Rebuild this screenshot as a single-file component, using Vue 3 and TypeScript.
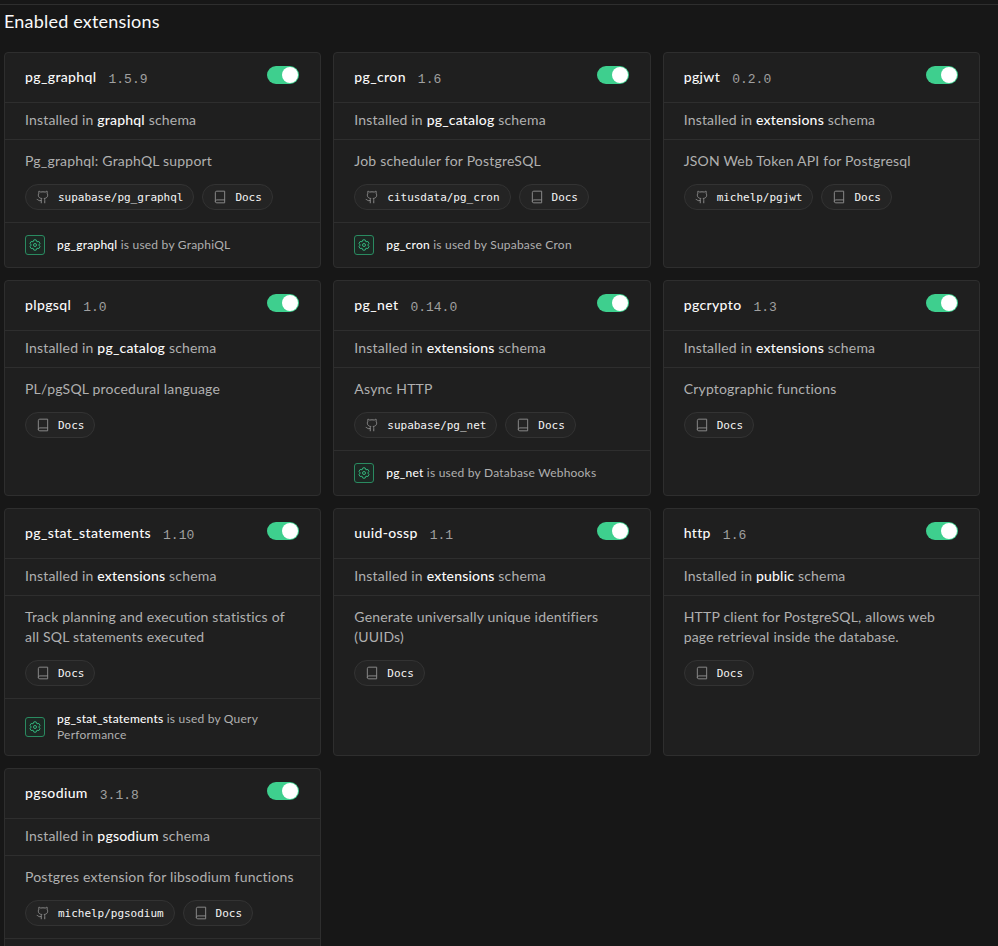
<script setup lang="ts">
interface Extension {
  name: string
  version: string
  schema: string
  description: string
  repo?: string
  usedBy?: string
}

const extensions: Extension[] = [
  { name: 'pg_graphql', version: '1.5.9', schema: 'graphql', description: 'Pg_graphql: GraphQL support', repo: 'supabase/pg_graphql', usedBy: 'GraphiQL' },
  { name: 'pg_cron', version: '1.6', schema: 'pg_catalog', description: 'Job scheduler for PostgreSQL', repo: 'citusdata/pg_cron', usedBy: 'Supabase Cron' },
  { name: 'pgjwt', version: '0.2.0', schema: 'extensions', description: 'JSON Web Token API for Postgresql', repo: 'michelp/pgjwt' },
  { name: 'plpgsql', version: '1.0', schema: 'pg_catalog', description: 'PL/pgSQL procedural language' },
  { name: 'pg_net', version: '0.14.0', schema: 'extensions', description: 'Async HTTP', repo: 'supabase/pg_net', usedBy: 'Database Webhooks' },
  { name: 'pgcrypto', version: '1.3', schema: 'extensions', description: 'Cryptographic functions' },
  { name: 'pg_stat_statements', version: '1.10', schema: 'extensions', description: 'Track planning and execution statistics of all SQL statements executed', usedBy: 'Query Performance' },
  { name: 'uuid-ossp', version: '1.1', schema: 'extensions', description: 'Generate universally unique identifiers (UUIDs)' },
  { name: 'http', version: '1.6', schema: 'public', description: 'HTTP client for PostgreSQL, allows web page retrieval inside the database.' },
  { name: 'pgsodium', version: '3.1.8', schema: 'pgsodium', description: 'Postgres extension for libsodium functions', repo: 'michelp/pgsodium', usedBy: '' },
]
</script>

<template>
  <main class="page">
    <h2 class="title">Enabled extensions</h2>
    <div class="grid">
      <article v-for="ext in extensions" :key="ext.name" class="card">
        <header class="head">
          <h3 class="name">{{ ext.name }}</h3>
          <span class="version">{{ ext.version }}</span>
          <button class="toggle" type="button" role="switch" aria-checked="true"><span class="knob"></span></button>
        </header>
        <p class="schema">Installed in <b>{{ ext.schema }}</b> schema</p>
        <div class="body">
          <p class="description">{{ ext.description }}</p>
          <div class="chips">
            <a v-if="ext.repo" class="chip">
              <svg class="icon" viewBox="0 0 24 24">
                <path d="M15 22v-4a4.8 4.8 0 0 0-1-3.500c3 0 6-2 6-5.500.08-1.250-.27-2.480-1-3.500.28-1.150.28-2.350 0-3.500 0 0-1 0-3 1.500-2.640-.5-5.360-.5-8 0C6 2 5 2 5 2c-.3 1.150-.3 2.350 0 3.500A5.403 5.403 0 0 0 4 9c0 3.500 3 5.500 6 5.500-.39.490-.680 1.050-.850 1.650-.17.600-.22 1.230-.15 1.850v4" />
                <path d="M9 18c-4.510 2-5-2-7-2" />
              </svg>
              <span class="chip-text">{{ ext.repo }}</span>
            </a>
            <a class="chip">
              <svg class="icon" viewBox="0 0 24 24">
                <path d="M4 19.500v-15A2.500 2.500 0 0 1 6.500 2H20v20H6.500a2.500 2.500 0 0 1 0-5H20" />
              </svg>
              <span class="chip-text">Docs</span>
            </a>
          </div>
        </div>
        <footer v-if="ext.usedBy !== undefined" class="used">
          <span class="badge">
            <svg viewBox="0 0 24 24">
              <path d="M9.800 1.700H14.200L15.750 5.500 19.800 5 22 8.750 19.500 12 22 15.250 19.800 19 15.750 18.500 14.200 22.300H9.800L8.250 18.500 4.200 19 2 15.250 4.500 12 2 8.750 4.200 5 8.250 5.500Z" />
              <circle cx="12" cy="12" r="3" />
            </svg>
          </span>
          <p v-if="ext.usedBy" class="used-text"><b>{{ ext.name }}</b> is used by {{ ext.usedBy }}</p>
        </footer>
      </article>
    </div>
  </main>
</template>

<style>
body {
  margin: 0;
  background: #171717;
}
</style>

<style scoped>
.page {
  box-sizing: border-box;
  height: 100vh;
  overflow: hidden;
  padding: 4px 18px 0 4px;
  background: linear-gradient(#2e2e2e, #2e2e2e) 0 4px / 100% 1px no-repeat #171717;
  font-family: Lato, 'Liberation Sans', sans-serif;
  color: #fafafa;
}
h2, h3, p {
  margin: 0;
  font-weight: 400;
}
.title {
  padding: 3px 0 17px;
  font-size: 18px;
  line-height: 28px;
  letter-spacing: 0.2px;
}
.grid {
  display: grid;
  grid-template-columns: repeat(3, minmax(0, 1fr));
  gap: 12px;
}
.card {
  display: flex;
  flex-direction: column;
  overflow: hidden;
  border: 1px solid #2e2e2e;
  border-radius: 4px;
  background: #1f1f1f;
}
.head {
  display: flex;
  align-items: center;
  gap: 12px;
  height: 49px;
  padding: 0 20px;
  border-bottom: 1px solid #2e2e2e;
}
.name {
  padding-bottom: 1px;
  font-size: 14px;
  font-weight: 500;
  line-height: 20px;
  letter-spacing: 0.36px;
}
.version {
  padding-top: 4px;
  font: 13px/20px 'Liberation Mono', monospace;
  color: #a0a0a0;
}
.toggle {
  display: flex;
  justify-content: flex-end;
  box-sizing: border-box;
  width: 32px;
  height: 18px;
  margin: 0 1px 5px auto;
  padding: 1px;
  border: 0;
  border-radius: 9px;
  background: #3ecf8e;
}
.knob {
  width: 16px;
  height: 16px;
  border-radius: 50%;
  background: #fff;
}
.schema {
  padding: 7px 20px 9px;
  border-bottom: 1px solid #2e2e2e;
  font-size: 14px;
  line-height: 20px;
  letter-spacing: 0.19px;
  color: #b0b0b0;
}
.schema b, .used-text b {
  font-weight: 500;
  color: #fafafa;
}
.body {
  padding: 11px 20px 12px;
}
.description {
  margin-bottom: 13px;
  font-size: 14px;
  line-height: 20px;
  letter-spacing: 0.2px;
  color: #b0b0b0;
}
.chips {
  display: flex;
  gap: 8px;
}
.chip {
  display: flex;
  align-items: center;
  gap: 8px;
  box-sizing: border-box;
  height: 26px;
  padding: 0 10px;
  border: 1px solid #333;
  border-radius: 13px;
  background: #242424;
  font: 11px/16px 'DejaVu Sans Mono', monospace;
  letter-spacing: -0.022px;
  color: #f4f4f4;
}
.chip-text {
  padding-top: 1px;
}
.icon {
  width: 14px;
  height: 14px;
  fill: none;
  stroke: #898989;
  stroke-width: 1.7;
  stroke-linecap: round;
  stroke-linejoin: round;
}
.used {
  display: flex;
  align-items: center;
  gap: 12px;
  padding: 12px 20px;
  border-top: 1px solid #2e2e2e;
}
.badge {
  display: flex;
  flex: none;
  align-items: center;
  justify-content: center;
  box-sizing: border-box;
  width: 20px;
  height: 20px;
  border: 1px solid #2a8a60;
  border-radius: 3px;
  background: #1c2823;
}
.badge svg {
  width: 12px;
  height: 12px;
  fill: none;
  stroke: #34b27b;
  stroke-width: 2;
  stroke-linejoin: round;
}
.used-text {
  max-width: 215px;
  font-size: 12px;
  line-height: 16px;
  letter-spacing: 0.22px;
  color: #b0b0b0;
}
</style>
